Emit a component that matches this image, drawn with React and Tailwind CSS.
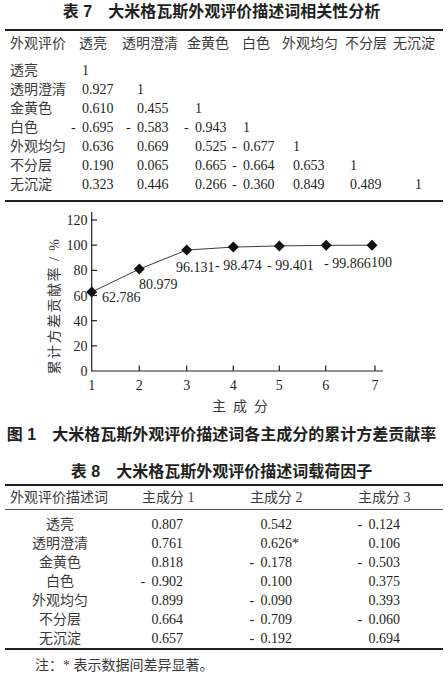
import React from "react";

const serif = { fontFamily: '"Liberation Serif", "Noto Sans CJK SC", serif' };
const sansBold = { fontFamily: '"Liberation Sans", "Noto Sans CJK SC", sans-serif' };

const t7Header = ["外观评价", "透亮", "透明澄清", "金黄色", "白色", "外观均匀", "不分层", "无沉淀"];
const t7Rows = [
  ["透亮", "1"],
  ["透明澄清", "0.927", "1"],
  ["金黄色", "0.610", "0.455", "1"],
  ["白色", "-0.695", "-0.583", "-0.943", "1"],
  ["外观均匀", "0.636", "0.669", "0.525", "-0.677", "1"],
  ["不分层", "0.190", "0.065", "0.665", "-0.664", "0.653", "1"],
  ["无沉淀", "0.323", "0.446", "0.266", "-0.360", "0.849", "0.489", "1"],
];

const t8Rows = [
  ["透亮", "0.807", "0.542", "-0.124"],
  ["透明澄清", "0.761", "0.626*", "0.106"],
  ["金黄色", "0.818", "-0.178", "-0.503"],
  ["白色", "-0.902", "0.100", "0.375"],
  ["外观均匀", "0.899", "-0.090", "0.393"],
  ["不分层", "0.664", "-0.709", "-0.060"],
  ["无沉淀", "0.657", "-0.192", "0.694"],
];

function HangNum({ v }) {
  if (v.startsWith("-")) {
    return (
      <span className="whitespace-nowrap">
        <span className="-ml-[11px] inline-block w-[11px] text-left">-</span>
        {v.slice(1)}
      </span>
    );
  }
  return <span>{v}</span>;
}

function RightNum({ v }) {
  let body = v;
  let star = null;
  if (body.endsWith("*")) {
    body = body.slice(0, -1);
    star = <span className="-mr-[7px] inline-block w-[7px]">*</span>;
  }
  if (body.startsWith("-")) {
    return (
      <span className="whitespace-nowrap">
        <span className="inline-block w-[11px] text-left">-</span>
        {body.slice(1)}
        {star}
      </span>
    );
  }
  return (
    <span className="whitespace-nowrap">
      {body}
      {star}
    </span>
  );
}

function Chart() {
  const yOf = (v) => 169 - (v * 151) / 120;
  const tickX = [91.7, 139.3, 186.7, 233.3, 279.3, 325.7, 375];
  const ptX = [91.7, 139.3, 186.7, 233.3, 279.3, 326.2, 372];
  const vals = [62.786, 80.979, 96.131, 98.474, 99.401, 99.866, 100];
  const pts = vals.map((v, i) => [ptX[i], yOf(v)]);
  const labels = [
    { t: "62.786", x: 102, y: 99.5 },
    { t: "80.979", x: 139, y: 86.7 },
    { t: "96.131", x: 176, y: 69.7 },
    { t: "- 98.474", x: 215, y: 67.7 },
    { t: "- 99.401", x: 267, y: 67.7 },
    { t: "- 99.866", x: 324, y: 65.7 },
    { t: "100", x: 371, y: 64.7 },
  ];
  const cjk = { fontFamily: '"Noto Sans CJK SC", sans-serif' };
  return (
    <svg width="448" height="220" className="block" style={serif}>
      <line x1="91.7" y1="10" x2="91.7" y2="169.5" stroke="#231f20" strokeWidth="1.2" />
      <line x1="91.2" y1="169" x2="383" y2="169" stroke="#231f20" strokeWidth="1.2" />
      {[20, 40, 60, 80, 100, 120].map((v) => (
        <line key={v} x1="91.7" y1={yOf(v)} x2="97" y2={yOf(v)} stroke="#231f20" strokeWidth="1.2" />
      ))}
      {[0, 20, 40, 60, 80, 100, 120].map((v) => (
        <text key={v} x="87.5" y={yOf(v) + 5} textAnchor="end" fontSize="14" fill="#231f20">
          {v}
        </text>
      ))}
      {tickX.slice(1).map((x, i) => (
        <line key={i} x1={x} y1="169" x2={x} y2="163.5" stroke="#231f20" strokeWidth="1.2" />
      ))}
      {tickX.map((x, i) => (
        <text key={i} x={x} y="188" textAnchor="middle" fontSize="14" fill="#231f20">
          {i + 1}
        </text>
      ))}
      {["主", "成", "分"].map((c, i) => (
        <text key={c} x={219 + i * 21} y="209" textAnchor="middle" fontSize="14" fill="#3a3a3a" style={cjk}>
          {c}
        </text>
      ))}
      <text
        x="0"
        y="0"
        transform="translate(59 104) rotate(-90)"
        textAnchor="middle"
        fontSize="14"
        letterSpacing="1.5"
        fill="#3a3a3a"
        style={serif}
      >
        累计方差贡献率 / %
      </text>
      <polyline points={pts.map((p) => p.join(",")).join(" ")} fill="none" stroke="#3a3a3a" strokeWidth="1" />
      {pts.map(([x, y], i) => (
        <polygon key={i} points={`${x},${y - 5.5} ${x + 5.5},${y} ${x},${y + 5.5} ${x - 5.5},${y}`} fill="#111" />
      ))}
      {labels.map((l, i) => (
        <text key={i} x={l.x} y={l.y} fontSize="14" fill="#231f20" style={{ whiteSpace: "pre" }}>
          {l.t}
        </text>
      ))}
    </svg>
  );
}

export default function App() {
  return (
    <div className="w-[448px] h-[674px] bg-white text-[#231f20] overflow-hidden" style={serif}>
      {/* Table 7 */}
      <div className="px-[5px]">
        <div className="h-[29px] flex justify-center pr-[5px]">
          <div className="leading-[24px] text-[16px] font-bold whitespace-nowrap" style={sansBold}>
            <span>表 7</span>
            <span className="ml-[16px]">大米格瓦斯外观评价描述词相关性分析</span>
          </div>
        </div>
        <div className="h-[2px] bg-[#231f20]" />
        <div className="h-[25px] pl-[5px] grid grid-cols-[69px_43px_65px_55px_40px_63px_48px_1fr] items-center text-[14px] text-[#3a3a3a]">
          {t7Header.map((h, i) => (
            <div key={i} className="whitespace-nowrap">
              {h}
            </div>
          ))}
        </div>
        <div className="pt-[4px] pb-[7px] pl-[5px] text-[14px]">
          {t7Rows.map((r, ri) => (
            <div key={ri} className="h-[19px] grid grid-cols-[72px_55px_58px_48px_50px_57px_65px_1fr] items-center">
              {Array.from({ length: 8 }).map((_, ci) => (
                <div key={ci} className={ci === 0 ? "whitespace-nowrap text-[#3a3a3a]" : "whitespace-nowrap"}>
                  {r[ci] ? ci === 0 ? r[ci] : <HangNum v={r[ci]} /> : null}
                </div>
              ))}
            </div>
          ))}
        </div>
        <div className="h-[2px] bg-[#231f20]" />
      </div>

      {/* Figure 1 */}
      <Chart />
      <div className="h-[26px] flex justify-center pr-[5px]">
        <div className="leading-[26px] text-[16px] font-bold whitespace-nowrap" style={sansBold}>
          <span>图 1</span>
          <span className="ml-[16px]">大米格瓦斯外观评价描述词各主成分的累计方差贡献率</span>
        </div>
      </div>

      {/* Table 8 */}
      <div className="px-[5px]">
        <div className="h-[36px] pt-[14px] flex justify-center pr-[5px]">
          <div className="leading-[20px] text-[16px] font-bold whitespace-nowrap" style={sansBold}>
            <span>表 8</span>
            <span className="ml-[16px]">大米格瓦斯外观评价描述词载荷因子</span>
          </div>
        </div>
        <div className="h-[2px] bg-[#231f20]" />
        <div className="h-[23px] pl-[5px] grid grid-cols-[132px_108px_108px_1fr] items-center text-[14px] text-[#3a3a3a]">
          <div className="whitespace-nowrap">外观评价描述词</div>
          <div className="whitespace-nowrap">主成分 1</div>
          <div className="whitespace-nowrap">主成分 2</div>
          <div className="whitespace-nowrap">主成分 3</div>
        </div>
        <div className="h-px bg-[#555]" />
        <div className="pt-[4px] pb-[1px] pl-[5px] text-[14px]">
          {t8Rows.map((r, ri) => (
            <div key={ri} className="h-[19px] grid grid-cols-[100px_73px_109px_108px_1fr] items-center">
              <div className="text-center whitespace-nowrap text-[#3a3a3a]">{r[0]}</div>
              <div className="text-right">
                <RightNum v={r[1]} />
              </div>
              <div className="text-right">
                <RightNum v={r[2]} />
              </div>
              <div className="text-right">
                <RightNum v={r[3]} />
              </div>
              <div />
            </div>
          ))}
        </div>
        <div className="h-[2px] bg-[#231f20]" />
        <div className="pt-[6px] pl-[30px] leading-[20px] text-[14px] text-[#3a3a3a] whitespace-nowrap">
          注：* 表示数据间差异显著。
        </div>
      </div>
    </div>
  );
}
